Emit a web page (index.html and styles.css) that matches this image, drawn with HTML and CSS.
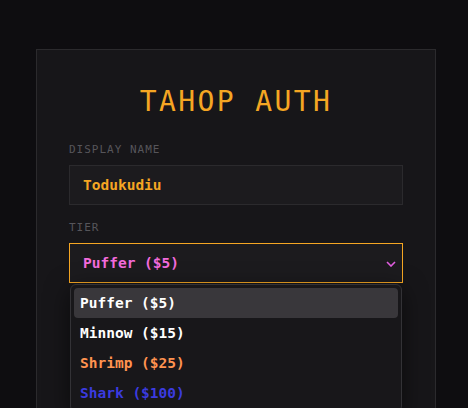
FILE: index.html
```html
<!DOCTYPE html>
<html>
<head>
<meta charset="utf-8">
<link rel="stylesheet" href="styles.css">
</head>
<body>
<div class="page">
  <div class="card">
    <h1 class="title">TAHOP AUTH</h1>
    <div class="field">
      <div class="label">DISPLAY NAME</div>
      <div class="input">Todukudiu</div>
    </div>
    <div class="field">
      <div class="label">TIER</div>
      <div class="select-wrap">
        <div class="select">
          <span>Puffer ($5)</span>
          <svg class="chev" width="10" height="6" viewBox="0 0 10 6"><path d="M1 1 L5 5 L9 1" fill="none" stroke="#e25ee0" stroke-width="1.6"/></svg>
        </div>
        <div class="menu">
          <div class="opt active">Puffer ($5)</div>
          <div class="opt">Minnow ($15)</div>
          <div class="opt shrimp">Shrimp ($25)</div>
          <div class="opt shark">Shark ($100)</div>
        </div>
      </div>
    </div>
  </div>
</div>
</body>
</html>
```
FILE: styles.css
```css
* { box-sizing: border-box; }
html, body { margin: 0; padding: 0; }
body {
  background: #0e0d10;
  font-family: "DejaVu Sans Mono", monospace;
}
.page {
  height: 408px;
  overflow: hidden;
  padding: 49px 32px 0 36px;
}
.card {
  width: 400px;
  height: 400px;
  background: #171619;
  border: 1px solid #2b2a2d;
  padding: 32px 32px 0 32px;
}
.title {
  margin: 0 0 21px 0;
  text-align: center;
  color: #f5a623;
  font-weight: normal;
  font-size: 28px;
  line-height: 40px;
  letter-spacing: 2.4px;
}
.field { margin-bottom: 16px; }
.label {
  color: #56555a;
  font-size: 11px;
  letter-spacing: 1px;
  line-height: 14px;
  margin-bottom: 8px;
}
.input {
  height: 40px;
  border: 1px solid #2b2a2d;
  background: #1c1b1e;
  color: #f5a623;
  font-weight: bold;
  font-size: 14.5px;
  padding: 0 13px;
  display: flex;
  align-items: center;
}
.select-wrap { position: relative; }
.select {
  height: 40px;
  border: 1px solid #f5a623;
  background: #1c1b1e;
  color: #f36bdc;
  font-weight: bold;
  font-size: 14.5px;
  padding: 0 6px 0 13px;
  display: flex;
  align-items: center;
  justify-content: space-between;
}
.chev { margin-top: 1px; }
.menu {
  position: absolute;
  left: 1px;
  right: 1px;
  top: 41px;
  background: #18171a;
  border: 1px solid #333236;
  border-radius: 6px;
  padding: 3px;
  box-shadow: 0 6px 24px rgba(0,0,0,0.55);
}
.opt {
  height: 30px;
  display: flex;
  align-items: center;
  padding: 0 6px;
  color: #ffffff;
  font-weight: bold;
  font-size: 14.5px;
  border-radius: 4px;
}
.opt.active { background: #39373b; }
.opt.shrimp { color: #ff9350; }
.opt.shark { color: #3b3bdf; }
```
